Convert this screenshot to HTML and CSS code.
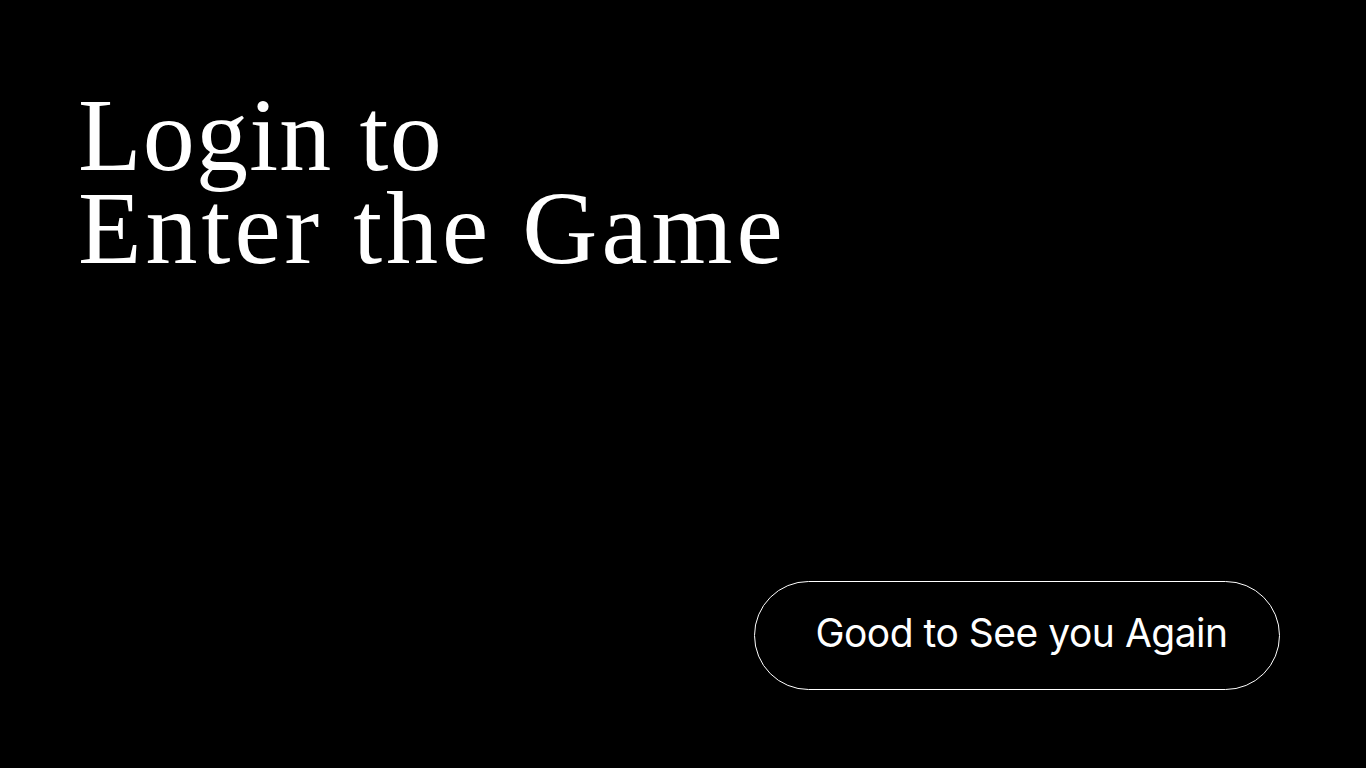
FILE: index.html
```html
<!DOCTYPE html>
<html lang="en">
<head>
<meta charset="utf-8">
<title>Login</title>
<link rel="stylesheet" href="styles.css">
</head>
<body>
<main class="screen">
  <h1 class="title"><span class="line line-first">Login to</span><span class="line">Enter the Game</span></h1>
  <div class="actions">
    <button class="pill">Good to See you Again</button>
  </div>
</main>
</body>
</html>
```
FILE: styles.css
```css
html, body {
  margin: 0;
  padding: 0;
  background: #000;
  height: 100%;
}
.screen {
  box-sizing: border-box;
  height: 100vh;
  display: flex;
  flex-direction: column;
  justify-content: space-between;
  padding: 88px 86px 78px 78px;
}
.title {
  margin: 0;
  color: #fff;
  font-family: "Liberation Serif", serif;
  font-weight: 400;
  font-size: 104px;
  line-height: 93px;
  letter-spacing: 4px;
}
.line {
  display: block;
}
.line-first {
  letter-spacing: 1.2px;
}
.actions {
  display: flex;
  justify-content: flex-end;
}
.pill {
  width: 526px;
  height: 109px;
  border: 1px solid #fff;
  border-radius: 55px;
  background: #000;
  color: #fff;
  font-family: Inter, "Liberation Sans", sans-serif;
  font-size: 39px;
  font-weight: 400;
  padding: 0 0 6px 9px;
  letter-spacing: -0.5px;
}
```
